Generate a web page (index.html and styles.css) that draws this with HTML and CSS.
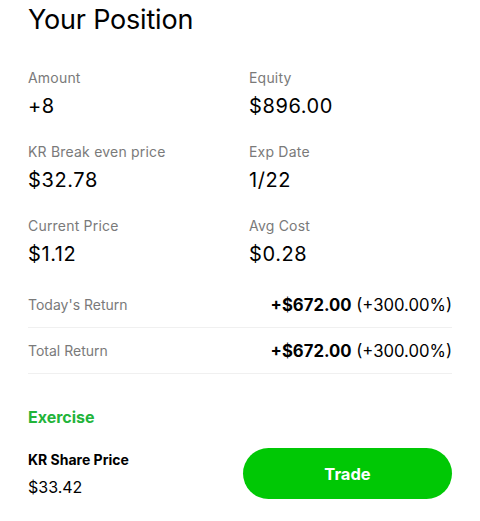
FILE: index.html
```html
<!DOCTYPE html>
<html lang="en">
<head>
  <meta charset="UTF-8" />
  <meta name="viewport" content="width=device-width, initial-scale=1.0" />
  <title>Your Position</title>
  <link rel="stylesheet" href="styles.css">
</head>
<body>
  <div class="position">
    <h1>Your Position</h1>

    <div class="stats">
      <div class="stat">
        <div class="label">Amount</div>
        <div class="value">+8</div>
      </div>
      <div class="stat">
        <div class="label">Equity</div>
        <div class="value">$896.00</div>
      </div>
      <div class="stat">
        <div class="label">KR Break even price</div>
        <div class="value">$32.78</div>
      </div>
      <div class="stat">
        <div class="label">Exp Date</div>
        <div class="value">1/22</div>
      </div>
      <div class="stat">
        <div class="label">Current Price</div>
        <div class="value">$1.12</div>
      </div>
      <div class="stat">
        <div class="label">Avg Cost</div>
        <div class="value">$0.28</div>
      </div>
    </div>

    <div class="returns">
      <div class="return-row">
        <span class="label">Today's Return</span>
        <span class="amount"><b>+$672.00</b> (+300.00%)</span>
      </div>
      <div class="return-row">
        <span class="label">Total Return</span>
        <span class="amount"><b>+$672.00</b> (+300.00%)</span>
      </div>
    </div>

    <h3 class="exercise">Exercise</h3>

    <div class="share">
      <div class="share-info">
        <div class="share-name">KR Share Price</div>
        <div class="share-price">$33.42</div>
      </div>
      <button type="button" class="trade">Trade</button>
    </div>
  </div>
</body>
</html>
```

FILE: styles.css
```css
* {
  box-sizing: border-box;
}

body {
  margin: 0;
  background: #ffffff;
  color: #000000;
  font-family: Inter, "Liberation Sans", sans-serif;
}

.position {
  padding: 0 28px;
}

h1 {
  margin: 0;
  padding-top: 3px;
  font-size: 27px;
  font-weight: 400;
  line-height: 34px;
  letter-spacing: -0.2px;
}

.stats {
  display: grid;
  grid-template-columns: 221px 1fr;
  row-gap: 26px;
  margin-top: 32px;
}

.label {
  font-size: 14px;
  line-height: 18px;
  color: #7a7a7a;
}

.stat .label {
  letter-spacing: 0.2px;
}

.value {
  margin-top: 8px;
  font-size: 20px;
  line-height: 22px;
  letter-spacing: 0.6px;
}

.returns {
  margin-top: 17px;
}

.return-row {
  display: flex;
  justify-content: space-between;
  align-items: center;
  height: 46px;
  border-bottom: 1px solid #f0f0f0;
}

.amount {
  font-size: 16.7px;
}

.amount b {
  font-weight: 700;
}

.exercise {
  margin: 33px 0 0;
  font-size: 16px;
  font-weight: 700;
  line-height: 20px;
  color: #22b43a;
}

.share {
  display: flex;
  justify-content: space-between;
  align-items: center;
  margin-top: 21px;
}

.share-name {
  font-size: 14px;
  font-weight: 700;
  line-height: 18px;
}

.share-price {
  margin-top: 8px;
  font-size: 16px;
  line-height: 20px;
}

.trade {
  width: 209px;
  height: 51px;
  border: none;
  border-radius: 26px;
  background: #00c805;
  color: #ffffff;
  font-family: inherit;
  font-size: 16.5px;
  font-weight: 700;
}
```
